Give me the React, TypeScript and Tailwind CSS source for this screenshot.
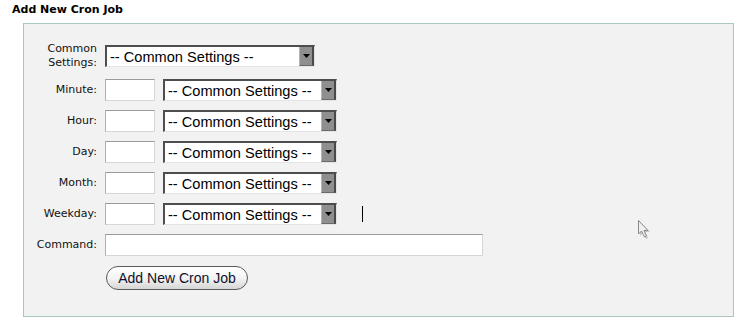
import * as React from "react";

const FakeSelect: React.FC<{ width: string }> = ({ width }) => {
  return (
    <div
      className={`${width} h-[22px] flex items-center bg-white border-t-2 border-l-2 border-[#4e4e4e] border-r border-b border-r-[#e4e4e4] border-b-[#e4e4e4]`}
    >
      <span className="flex-1 pl-[3px] text-[14.6px] leading-[18px] text-black font-['Liberation_Sans',Arial,sans-serif] whitespace-nowrap overflow-hidden">
        -- Common Settings --
      </span>
      <div className="w-[15px] h-[19px] mb-px bg-[#8f8f8f] border-l border-l-[#b5b5b5] border-r-2 border-r-[#4a4a4a] border-b border-b-[#6a6a6a] flex items-center justify-center">
        <svg width="7" height="4" viewBox="0 0 7 4">
          <path d="M0 0 H7 L3.5 4 Z" fill="#000" />
        </svg>
      </div>
    </div>
  );
};

const TextBox: React.FC<{ width: string }> = ({ width }) => (
  <div
    className={`${width} h-[22px] bg-white border border-t-[#9a9a9a] border-l-[#b0b0b0] border-r-[#d6d6d6] border-b-[#d6d6d6]`}
  />
);

const Row: React.FC<{ label: React.ReactNode; children: React.ReactNode }> = ({ label, children }) => (
  <div className="flex items-center">
    <div className="w-[73px] text-right text-[11px] leading-[14px] text-[#111]">{label}</div>
    <div className="ml-[8px] flex items-center">{children}</div>
  </div>
);

const fields = ["Minute:", "Hour:", "Day:", "Month:", "Weekday:"];

export default function App() {
  return (
    <div className="relative w-[750px] h-[330px] bg-white font-['DejaVu_Sans',Verdana,sans-serif] overflow-hidden">
      <div className="pl-3 pt-[3px] text-[11px] leading-[14px] font-bold text-black">Add New Cron Job</div>
      <div className="ml-[23px] mt-[6px] w-[711px] h-[294px] border border-[#a8c9b8] bg-[#f2f2f2] pt-[18px]">
        <div className="flex flex-col gap-[9px]">
          <Row
            label={
              <>
                Common
                <br />
                Settings:
              </>
            }
          >
            <FakeSelect width="w-[210px]" />
          </Row>
          {fields.map((f) => (
            <Row key={f} label={f}>
              <TextBox width="w-[50px]" />
              <div className="ml-[8px]">
                <FakeSelect width="w-[174px]" />
              </div>
              {f === "Weekday:" && <div className="ml-[25px] w-px h-[16px] bg-black" />}
            </Row>
          ))}
          <Row label="Command:">
            <TextBox width="w-[378px]" />
          </Row>
        </div>
        <div className="ml-[82px] mt-[10px]">
          <button className="w-[142px] h-[24px] rounded-full border border-[#5a5a5a] bg-gradient-to-b from-white via-[#f4f4f4] to-[#d6d6d6] text-[14px] leading-[16px] text-[#10102a] font-['Liberation_Sans',Arial,sans-serif]">
            Add New Cron Job
          </button>
        </div>
      </div>
      <svg className="absolute left-[637px] top-[219px]" width="18" height="24" viewBox="0 0 18 24">
        <path d="M3 3 L3 17 L6 14 L9 20 L11 19 L8.5 13 L13 13 Z" fill="#bdbdbd" opacity="0.8" />
        <path d="M1.5 1.5 L1.5 15 L4.5 12 L7.5 18 L9.5 17 L7 11.5 L11 11.5 Z" fill="#f0f0f0" stroke="#8a8a8a" strokeWidth="1" />
      </svg>
    </div>
  );
}
